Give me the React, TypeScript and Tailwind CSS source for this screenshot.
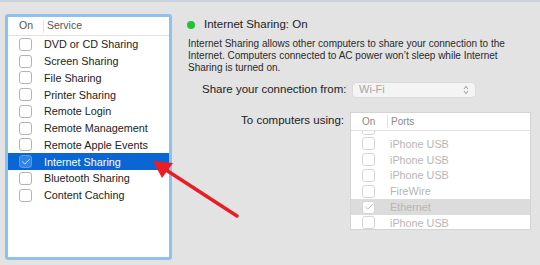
import { Check } from 'lucide-react';

const services = [
  'DVD or CD Sharing',
  'Screen Sharing',
  'File Sharing',
  'Printer Sharing',
  'Remote Login',
  'Remote Management',
  'Remote Apple Events',
  'Internet Sharing',
  'Bluetooth Sharing',
  'Content Caching',
];

// first entry is scrolled under the header, only its checkbox edge shows
const ports = ['', 'iPhone USB', 'iPhone USB', 'iPhone USB', 'FireWire', 'Ethernet', 'iPhone USB'];

function Box({ checked, selected, faded }: { checked?: boolean; selected?: boolean; faded?: boolean }) {
  return (
    <div
      className={`w-[13px] h-[13px] rounded-[3px] border flex items-center justify-center ${
        selected
          ? 'border-[#5a9ae8] bg-[#2f84ea]'
          : faded
            ? 'border-[#d6d6d6] bg-white'
            : 'border-[#b4b4b4] bg-white'
      }`}
    >
      {checked && (
        <Check
          className={`w-[10px] h-[10px] ${selected ? 'text-white' : 'text-[#a8a8a8]'}`}
          strokeWidth={2}
        />
      )}
    </div>
  );
}

export default function App() {
  return (
    <div
      className="relative w-[540px] h-[265px] bg-[#e3e3e3] overflow-hidden text-[#222]"
      style={{ fontFamily: '"Liberation Sans", Arial, sans-serif' }}
    >
      <div className="h-[2px] bg-[#ccd0d9]" />

      <div className="flex">
        {/* Service list */}
        <div className="ml-[5px] mt-[12px] w-[167px] h-[246px] border-[3px] border-[#8fc1ef] rounded-[3px] bg-white">
          <div className="flex items-center h-[19px] border-b border-[#e2e2e2] text-[10.5px] text-[#555]">
            <div className="w-[35px] pl-[11px]">On</div>
            <div className="w-px h-[13px] bg-[#e2e2e2]" />
            <div className="pl-[3px]">Service</div>
          </div>
          {services.map((s) => {
            const sel = s === 'Internet Sharing';
            return (
              <div
                key={s}
                className={`flex items-center h-[16.75px] text-[10.8px] ${sel ? 'bg-[#0a66d4] text-white' : ''}`}
              >
                <div className="w-[36px] pl-[11px]">
                  <Box checked={sel} selected={sel} />
                </div>
                <div>{s}</div>
              </div>
            );
          })}
        </div>

        {/* Detail pane */}
        <div className="ml-[16px] mt-[16px] flex-1 pr-[6px]">
          <div className="flex items-center h-[14px]">
            <div className="w-[8px] h-[8px] rounded-full bg-[#21c233] ml-[-1px]" />
            <div className="ml-[9px] text-[11.5px] text-[#222]">Internet Sharing: On</div>
          </div>
          <div className="mt-[6px] text-[10px] leading-[12px] text-[#2a2a2a] whitespace-nowrap">
            Internet Sharing allows other computers to share your connection to the
            <br />
            Internet. Computers connected to AC power won’t sleep while Internet
            <br />
            Sharing is turned on.
          </div>

          <div className="flex items-center mt-[7px] ml-[14px]">
            <div className="w-[150px] text-[11.5px]">Share your connection from:</div>
            <div className="w-[124px] h-[16px] rounded-[4px] bg-[#f4f4f4] border border-[#dadada] flex items-center justify-between px-[6px] text-[11px] text-[#a6a6a6]">
              <span>Wi-Fi</span>
              <svg width="6" height="10" viewBox="0 0 6 10" fill="none" stroke="#a9a9a9" strokeWidth="1.1">
                <path d="M1 4 L3 1.5 L5 4" />
                <path d="M1 6 L3 8.5 L5 6" />
              </svg>
            </div>
          </div>

          <div className="flex mt-[14px]">
            <div className="w-[162px] text-right pr-[6px] text-[11.5px] leading-[14px] pt-[1px]">To computers using:</div>
            <div className="w-[181px] h-[118px] bg-white border border-[#d4d4d4] flex flex-col">
              <div className="flex items-center h-[18px] border-b border-[#e0e0e0] text-[10px] text-[#8a8a8a] bg-white relative z-10">
                <div className="w-[36px] pl-[11px]">On</div>
                <div className="w-px h-[13px] bg-[#e2e2e2]" />
                <div className="pl-[3px]">Ports</div>
              </div>
              <div className="flex-1 overflow-hidden">
                <div className="mt-[-11px]">
                  {ports.map((p, i) => {
                    const sel = p === 'Ethernet';
                    return (
                      <div
                        key={i}
                        className={`flex items-center h-[15.8px] text-[10.8px] text-[#b6b6b6] ${sel ? 'bg-[#dcdcdc]' : ''}`}
                      >
                        <div className="w-[39px] pl-[11px]">
                          <Box checked={sel} faded />
                        </div>
                        <div>{p}</div>
                      </div>
                    );
                  })}
                </div>
              </div>
            </div>
          </div>
        </div>
      </div>

      {/* red annotation arrow */}
      <svg className="absolute left-0 top-0 pointer-events-none" width="540" height="265">
        <line x1="237" y1="216" x2="163" y2="168" stroke="#ec1c24" strokeWidth="3.5" strokeLinecap="round" />
        <polygon points="153,161 173,163 162,178" fill="#ec1c24" />
      </svg>
    </div>
  );
}
